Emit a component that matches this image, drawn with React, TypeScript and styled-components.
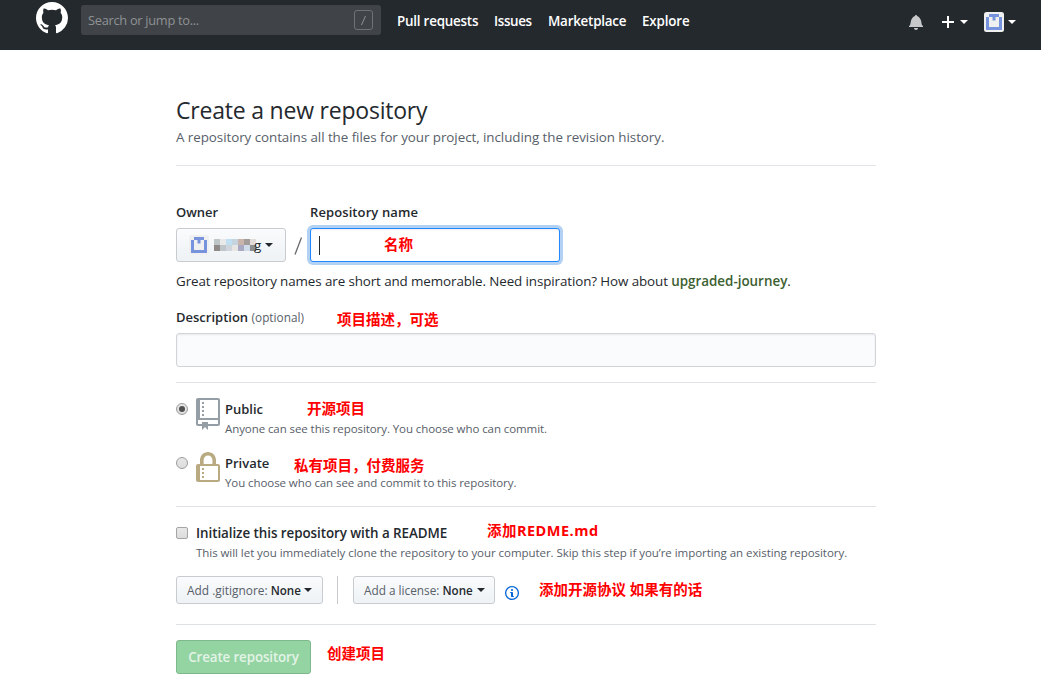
import React from "react";
import styled, { createGlobalStyle } from "styled-components";

const GlobalStyle = createGlobalStyle`
  *, *::before, *::after { box-sizing: border-box; }
  body {
    margin: 0;
    background: #fff;
    color: #24292e;
    font-family: "Open Sans", "Noto Sans", "Noto Sans CJK SC", sans-serif;
    font-size: 13.4px;
    line-height: 21px;
    overflow: hidden;
  }
  p, h1 { margin: 0; }
`;

/* Text run with its own size, weight and tracking */
const Text = styled.span<{ $size?: number; $weight?: number; $color?: string; $track?: number }>`
  font-size: ${(p) => p.$size ?? 13.4}px;
  font-weight: ${(p) => p.$weight ?? 400};
  color: ${(p) => p.$color ?? "inherit"};
  letter-spacing: ${(p) => p.$track ?? 0}px;
  white-space: nowrap;
`;

const Header = styled.header`
  display: flex;
  align-items: flex-start;
  height: 50px;
  padding: 0 25px 0 36px;
  background: #24292e;
  color: #fff;
`;

const Logo = styled.svg`
  display: block;
  width: 32px;
  height: 32px;
  margin-top: 2px;
  fill: #fff;
`;

const Search = styled.div`
  display: flex;
  align-items: center;
  justify-content: space-between;
  width: 300px;
  height: 30px;
  margin: 5px 16px 0 13px;
  padding: 0 8px 0 7px;
  border-radius: 3px;
  background: #404448;
`;

const SlashKey = styled.svg`
  display: block;
  width: 19px;
  height: 20px;
  fill: none;
  stroke: #6f7377;
`;

const Nav = styled.nav`
  display: flex;
  gap: 16px;
  margin-top: 11px;
`;

const NavItem = styled.a<{ $width: number }>`
  width: ${(p) => p.$width}px;
  font-weight: 600;
  color: #fff;
  white-space: nowrap;
`;

const HeaderTools = styled.div`
  display: flex;
  align-items: center;
  height: 16px;
  margin: 14px 0 0 auto;
`;

const Glyph = styled.svg<{ $w: number; $h: number; $color: string; $gap?: number }>`
  display: block;
  flex: none;
  width: ${(p) => p.$w}px;
  height: ${(p) => p.$h}px;
  margin-left: ${(p) => p.$gap ?? 0}px;
  fill: ${(p) => p.$color};
`;

const Caret = styled.span<{ $gap?: number; $color?: string }>`
  flex: none;
  width: 0;
  height: 0;
  margin-left: ${(p) => p.$gap ?? 4}px;
  border: 4px solid transparent;
  border-top-color: ${(p) => p.$color ?? "#24292e"};
  border-bottom: 0;
`;

const AvatarSvg = styled.svg<{ $gap?: number }>`
  display: block;
  flex: none;
  width: 20px;
  height: 20px;
  margin-left: ${(p) => p.$gap ?? 0}px;
`;

const Main = styled.main`
  width: 700px;
  margin-left: 176px;
  padding-top: 43px;
`;

const Title = styled.h1`
  height: 36px;
  font-size: 23px;
  font-weight: 400;
  line-height: 34px;
  letter-spacing: -0.21px;
  white-space: nowrap;
`;

const Lead = styled.p`
  height: 37px;
  line-height: 17px;
  color: #586069;
  border-bottom: 1px solid #e1e4e8;
  margin-bottom: 36px;
`;

const FieldRow = styled.div`
  display: flex;
  align-items: flex-start;
`;

const Field = styled.div<{ $width: number }>`
  display: flex;
  flex-direction: column;
  width: ${(p) => p.$width}px;
`;

const FieldLabel = styled.label`
  height: 26px;
  font-weight: 600;
  line-height: 21px;
  white-space: nowrap;
`;

const Button = styled.button<{ $width: number; $height: number; $pad: number }>`
  display: flex;
  align-items: center;
  width: ${(p) => p.$width}px;
  height: ${(p) => p.$height}px;
  padding: 0 ${(p) => p.$pad}px;
  border: 1px solid #c8cbcf;
  border-radius: 3px;
  background: linear-gradient(#fafbfc, #eff3f6 90%);
  color: #24292e;
  font-family: inherit;
`;

const OwnerTail = styled.span`
  margin-left: -3px;
  font-size: 13.4px;
`;

const Slash = styled.svg`
  display: block;
  width: 24px;
  height: 34px;
  margin-top: 26px;
  fill: none;
  stroke: #666b70;
  stroke-width: 1.3;
`;

const Input = styled.div<{ $focused?: boolean }>`
  display: flex;
  align-items: center;
  width: 100%;
  height: 34px;
  padding: 0 8px;
  border: 1px solid ${(p) => (p.$focused ? "#2188ff" : "#d1d5da")};
  border-radius: 3px;
  background: ${(p) => (p.$focused ? "#fff" : "#fafbfc")};
  box-shadow: inset 0 1px 2px rgba(27, 31, 35, 0.075)
    ${(p) => (p.$focused ? ", 0 0 0 3px rgba(3, 102, 214, 0.3)" : "")};
`;

const TextCursor = styled.span`
  width: 1px;
  height: 19px;
  background: #24292e;
`;

const Hint = styled.p`
  height: 45px;
  padding-top: 9px;
  white-space: nowrap;
`;

const Rule = styled.hr<{ $before: number; $after: number }>`
  height: 1px;
  margin: ${(p) => p.$before}px 0 ${(p) => p.$after}px;
  border: 0;
  background: #dfe2e5;
`;

const Option = styled.div<{ $height: number }>`
  display: flex;
  align-items: flex-start;
  height: ${(p) => p.$height}px;
`;

const Radio = styled.span<{ $checked?: boolean }>`
  display: grid;
  place-items: center;
  flex: none;
  width: 12px;
  height: 12px;
  margin: 5px 8px 0 0;
  border: 1px solid #9c9c9c;
  border-radius: 50%;
  background: linear-gradient(#e6e6e6, #dedede);

  &::after {
    content: "";
    width: 6px;
    height: 6px;
    border-radius: 50%;
    background: ${(p) => (p.$checked ? "#505050" : "transparent")};
  }
`;

const Checkbox = styled.span`
  flex: none;
  width: 12px;
  height: 12px;
  margin: 4px 8px 0 0;
  border: 1px solid #a5a5a5;
  border-radius: 2px;
  background: linear-gradient(#e8e8e8, #dcdcdc);
`;

const OptionText = styled.div<{ $gap?: number; $first?: number }>`
  display: flex;
  flex-direction: column;
  margin-left: ${(p) => p.$gap ?? 0}px;

  > span:first-child { line-height: ${(p) => p.$first ?? 22}px; }
  > span:last-child { line-height: 18px; }
`;

const Pickers = styled.div`
  display: flex;
  align-items: center;
  height: 28px;
`;

const Divider = styled.span`
  width: 1px;
  height: 28px;
  margin: 0 15px 0 14px;
  background: #c6cace;
`;

const InfoWrap = styled.span`
  margin: 6px 0 0 10px;
`;

const Submit = styled.button`
  display: flex;
  align-items: center;
  justify-content: center;
  width: 135px;
  height: 34px;
  padding: 0;
  border: 1px solid #7db98d;
  border-radius: 3px;
  background: #94d3a2;
  color: #e2f4e6;
  font-family: inherit;
`;

/* Red remarks laid over the form */
const Note = styled.span<{ $x: number; $y: number; $track?: number }>`
  position: absolute;
  left: ${(p) => p.$x}px;
  top: ${(p) => p.$y}px;
  color: #fe0000;
  font-family: "Open Sans", "Noto Sans CJK SC", sans-serif;
  font-size: 14.5px;
  font-weight: 700;
  line-height: 20px;
  letter-spacing: ${(p) => p.$track ?? 0}px;
  white-space: nowrap;
`;

const Avatar = ({ gap }: { gap?: number }) => (
  <AvatarSvg $gap={gap} viewBox="0 0 20 20">
    <rect width="20" height="20" rx="2.5" fill="#f0f0f0" />
    <path
      d="M2 5H5V2H15V5H18V18H2ZM5 5V15H15V5H11.5V8.5H8.5V5Z"
      fill="#7793de"
      fillRule="evenodd"
    />
  </AvatarSvg>
);

const mosaic = [
  ["#bfc6c8", "#e9e9ea", "#c1dff3", "#c5d4df", "#c9b4ab", "#a49b9b", "#e2ddda"],
  ["#8f8987", "#bfc5c9", "#cfd5dc", "#e8e6e5", "#a9a9c4", "#d0dce9", "#8d8e90"],
];

const OwnerMosaic = () => (
  <Glyph $w={43} $h={14} $gap={5} $color="none" viewBox="0 0 43 14">
    {mosaic.map((row, y) =>
      row.map((c, x) => <rect key={`${x}-${y}`} x={x * 6} y={1 + y * 6} width="6" height="6" fill={c} />)
    )}
  </Glyph>
);

const notes: { x: number; y: number; text: string; track?: number }[] = [
  { x: 384, y: 235, text: "名称" },
  { x: 337, y: 310, text: "项目描述，可选" },
  { x: 307, y: 399, text: "开源项目" },
  { x: 294, y: 456, text: "私有项目，付费服务" },
  { x: 487, y: 521, text: "添加REDME.md", track: 0.48 },
  { x: 539, y: 580, text: "添加开源协议 如果有的话" },
  { x: 327, y: 644, text: "创建项目" },
];

export default function App() {
  return (
    <>
      <GlobalStyle />
      <Header>
        <Logo viewBox="0 0 16 16">
          <path d="M8 0C3.58 0 0 3.58 0 8c0 3.54 2.29 6.53 5.47 7.59.4.07.55-.17.55-.38 0-.19-.01-.82-.01-1.49-2.01.37-2.53-.49-2.69-.94-.09-.23-.48-.94-.82-1.13-.28-.15-.68-.52-.01-.53.63-.01 1.08.58 1.23.82.72 1.21 1.87.87 2.33.66.07-.52.28-.87.51-1.07-1.78-.2-3.64-.89-3.64-3.95 0-.87.31-1.59.82-2.15-.08-.2-.36-1.02.08-2.12 0 0 .67-.21 2.2.82.64-.18 1.32-.27 2-.27.68 0 1.36.09 2 .27 1.53-1.04 2.2-.82 2.2-.82.44 1.1.16 1.92.08 2.12.51.56.82 1.27.82 2.15 0 3.07-1.87 3.75-3.65 3.95.29.25.54.73.54 1.48 0 1.07-.01 1.93-.01 2.2 0 .21.15.46.55.38A8.013 8.013 0 0 0 16 8c0-4.42-3.58-8-8-8z" />
        </Logo>
        <Search>
          <Text $size={12.8} $track={-0.28} $color="#8f9294">Search or jump to...</Text>
          <SlashKey viewBox="0 0 19 20">
            <rect x=".5" y=".5" width="18" height="19" rx="2.5" />
            <path d="M11.5 6 7.5 15" stroke="#8f9294" />
          </SlashKey>
        </Search>
        <Nav>
          <NavItem $width={81}><Text $weight={600} $track={-0.22}>Pull requests</Text></NavItem>
          <NavItem $width={38}><Text $weight={600} $track={-0.35}>Issues</Text></NavItem>
          <NavItem $width={78}><Text $weight={600} $track={-0.24}>Marketplace</Text></NavItem>
          <NavItem $width={48}><Text $weight={600} $track={-0.15}>Explore</Text></NavItem>
        </Nav>
        <HeaderTools>
          <Glyph $w={14} $h={16} $color="#c8c9cb" viewBox="0 0 14 16">
            <path d="M14 12v1H0v-1l.73-.58c.77-.77.81-2.55 1.19-4.42C2.69 3.23 6 2 6 2c0-.55.45-1 1-1s1 .45 1 1c0 0 3.39 1.23 4.16 5 .38 1.88.42 3.66 1.19 4.42l.66.58H14zm-7 4c1.11 0 2-.89 2-2H5c0 1.11.89 2 2 2z" />
          </Glyph>
          <Glyph $w={12} $h={16} $gap={19} $color="#fff" viewBox="0 0 12 16">
            <path d="M12 9H7v5H5V9H0V7h5V2h2v5h5v2z" />
          </Glyph>
          <Caret $gap={6} $color="#fff" />
          <Avatar gap={16} />
          <Caret $gap={4} $color="#fff" />
        </HeaderTools>
      </Header>

      <Main>
        <Title>Create a new repository</Title>
        <Lead>
          <Text $track={-0.06}>A repository contains all the files for your project, including the revision history.</Text>
        </Lead>

        <FieldRow>
          <Field $width={110}>
            <FieldLabel><Text $weight={600} $size={13}>Owner</Text></FieldLabel>
            <Button $width={110} $height={34} $pad={12}>
              <Avatar />
              <OwnerMosaic />
              <OwnerTail>g</OwnerTail>
              <Caret />
            </Button>
          </Field>
          <Slash viewBox="0 0 24 34"><path d="M15.5 9.5 9 26.5" /></Slash>
          <Field $width={250}>
            <FieldLabel><Text $weight={600} $size={13} $track={0.1}>Repository name</Text></FieldLabel>
            <Input $focused><TextCursor /></Input>
          </Field>
        </FieldRow>

        <Hint>
          <Text $track={-0.105}>Great repository names are short and memorable. Need inspiration? How about </Text>
          <Text $weight={600} $color="#3d6031">upgraded-journey</Text>
          <Text>.</Text>
        </Hint>

        <Field $width={700}>
          <FieldLabel>
            <Text $weight={600} $size={13}>Description</Text>{" "}
            <Text $size={11.8} $color="#586069">(optional)</Text>
          </FieldLabel>
          <Input />
        </Field>

        <Rule $before={15} $after={15} />

        <Option $height={54}>
          <Radio $checked />
          <Glyph $w={24} $h={32} $color="#959da5" viewBox="0 0 12 16">
            <path d="M4 9H3V8h1v1zm0-3H3v1h1V6zm0-2H3v1h1V4zm0-2H3v1h1V2zm8-1v12c0 .55-.45 1-1 1H6v2l-1.5-1.5L3 16v-2H1c-.55 0-1-.45-1-1V1c0-.55.45-1 1-1h10c.55 0 1 .45 1 1zm-1 10H1v2h2v-1h3v1h5v-2zm0-10H2v9h9V1z" />
          </Glyph>
          <OptionText $gap={5}>
            <Text $weight={600} $size={13}>Public</Text>
            <Text $size={11.5} $track={-0.08} $color="#586069">Anyone can see this repository. You choose who can commit.</Text>
          </OptionText>
        </Option>
        <Option $height={39}>
          <Radio />
          <Glyph $w={24} $h={32} $color="#b9aa82" viewBox="0 0 12 16">
            <path d="M4 13H3v-1h1v1zm8-6v7c0 .55-.45 1-1 1H1c-.55 0-1-.45-1-1V7c0-.55.45-1 1-1h1V4c0-2.2 1.8-4 4-4s4 1.8 4 4v2h1c.55 0 1 .45 1 1zM3.8 6h4.41V4c0-1.22-.98-2.2-2.2-2.2-1.22 0-2.2.98-2.2 2.2v2H3.8zM11 7H2v7h9V7zM4 8H3v1h1V8zm0 2H3v1h1v-1z" />
          </Glyph>
          <OptionText $gap={5}>
            <Text $weight={600} $size={13}>Private</Text>
            <Text $size={11.5} $track={-0.08} $color="#586069">You choose who can see and commit to this repository.</Text>
          </OptionText>
        </Option>

        <Rule $before={15} $after={16} />

        <Option $height={53}>
          <Checkbox />
          <OptionText $first={21}>
            <Text $weight={600} $track={-0.06}>Initialize this repository with a README</Text>
            <Text $size={11.5} $track={-0.05} $color="#586069">This will let you immediately clone the repository to your computer. Skip this step if you’re importing an existing repository.</Text>
          </OptionText>
        </Option>

        <Pickers>
          <Button $width={147} $height={28} $pad={10}>
            <Text $size={11.9} $color="#586069">Add .gitignore:&nbsp;</Text>
            <Text $size={11.6} $weight={600}>None</Text>
            <Caret $gap={3} />
          </Button>
          <Divider />
          <Button $width={142} $height={28} $pad={10}>
            <Text $size={11.8} $color="#586069">Add a license:&nbsp;</Text>
            <Text $size={11.6} $weight={600}>None</Text>
            <Caret $gap={4} />
          </Button>
          <InfoWrap>
            <Glyph $w={14} $h={16} $color="#0366d6" viewBox="0 0 14 16">
              <path d="M6.3 5.69a.942.942 0 0 1-.28-.7c0-.28.09-.52.28-.7.19-.18.42-.28.7-.28.28 0 .52.09.7.28.18.19.28.42.28.7 0 .28-.09.52-.28.7a1 1 0 0 1-.7.3c-.28 0-.52-.11-.7-.3zM8 7.99c-.02-.25-.11-.48-.31-.69-.2-.19-.42-.3-.69-.31H6c-.27.02-.48.13-.69.31-.2.2-.3.44-.31.69h1v3c.02.27.11.5.31.69.2.2.42.31.69.31h1c.27 0 .48-.11.69-.31.2-.19.3-.42.31-.69H8V7.98v.01zM7 2.3c-3.14 0-5.7 2.54-5.7 5.68 0 3.14 2.56 5.7 5.7 5.7s5.7-2.55 5.7-5.7c0-3.15-2.56-5.69-5.7-5.69v.01zM7 .98c3.86 0 7 3.14 7 7s-3.14 7-7 7-7-3.12-7-7 3.14-7 7-7z" />
            </Glyph>
          </InfoWrap>
        </Pickers>

        <Rule $before={20} $after={15} />

        <Submit><Text $weight={600} $track={-0.14}>Create repository</Text></Submit>
      </Main>

      {notes.map(({ x, y, text, track }) => (
        <Note key={text} $x={x} $y={y} $track={track}>{text}</Note>
      ))}
    </>
  );
}
